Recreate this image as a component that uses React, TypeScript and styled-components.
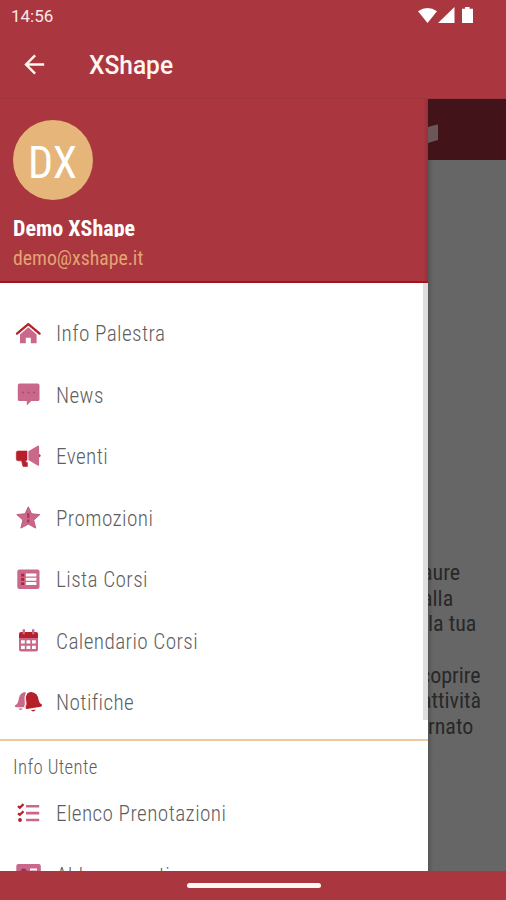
import React from "react";
import styled, { createGlobalStyle } from "styled-components";

const red = "#aa3740";
const deep = "#b5202b";
const pink = "#c9688a";

const Global = createGlobalStyle`
  *, *::before, *::after { box-sizing: border-box; }
  body { margin: 0; background: ${red}; font-family: "Roboto Condensed", Roboto, "Liberation Sans", sans-serif; overflow: hidden; }
  svg { display: block; flex: none; }
`;

const Screen = styled.div`
  width: 506px;
  height: 900px;
  display: flex;
  flex-direction: column;
  overflow: hidden;
  background: ${red};
`;
const StatusBar = styled.div`
  height: 32px;
  flex: none;
  display: flex;
  justify-content: space-between;
  align-items: center;
  padding: 0 32px 0 11px;
  color: #fbe9e6;
  font-family: Roboto, sans-serif;
`;
const StatusIcons = styled.div`
  display: flex;
  align-items: center;
`;
const Toolbar = styled.header`
  height: 67px;
  flex: none;
  display: flex;
  align-items: center;
  padding: 0 0 2px 20px;
  gap: 40px;
  color: #fff5f1;
  border-bottom: 1px solid #a0343c;
  font-family: Roboto, sans-serif;
`;
const Title = styled.div`
  padding-top: 4px;
`;
const Label = styled.span<{ $size: number; $scale?: number; $weight?: number; $space?: number }>`
  display: inline-block;
  flex: none;
  white-space: nowrap;
  line-height: 1.2;
  font-size: ${(p) => p.$size}px;
  font-weight: ${(p) => p.$weight ?? 400};
  letter-spacing: ${(p) => p.$space ?? 0}px;
  transform: scaleX(${(p) => p.$scale ?? 1});
  transform-origin: 0 50%;
`;
const Body = styled.div`
  height: 772px;
  flex: none;
  display: flex;
`;
const Drawer = styled.aside`
  width: 428px;
  flex: none;
  overflow: hidden;
  background: #fff;
  color: #5f5f5f;
`;
const Profile = styled.div`
  height: 184px;
  padding: 21px 0 0 13px;
  background: linear-gradient(to left, #963039, ${red} 5px);
  border-bottom: 2px solid #a3131f;
  display: flex;
  flex-direction: column;
  align-items: flex-start;
`;
const Avatar = styled.div`
  width: 80px;
  height: 80px;
  flex: none;
  border-radius: 50%;
  background: #e6b579;
  color: #fff;
  padding: 6px 0 0 15px;
  display: flex;
  align-items: center;
`;
const Name = styled.div`
  height: 21px;
  margin-top: 16px;
  overflow: hidden;
  color: #fff;
`;
const Email = styled.div`
  height: 28px;
  margin-top: 9px;
  color: #e3a472;
`;
const Scroll = styled.div`
  height: 437px;
  background: linear-gradient(#dedede, #dedede) right top / 5px 100% no-repeat;
`;
const Menu = styled.nav`
  padding-top: 20px;
`;
const Item = styled.div`
  height: 61.5px;
  display: flex;
  align-items: center;
  gap: 14px;
  padding-left: 14px;
`;
const Section = styled.section`
  margin-top: 19px;
  border-top: 2px solid #f0c8a0;
`;
const SectionTitle = styled.div`
  height: 42px;
  padding: 14px 0 0 13px;
`;
const Backdrop = styled.main`
  flex: 1;
  overflow: hidden;
  background: linear-gradient(to right, #555, #666 5px);
  color: #282828;
`;
const PageTabs = styled.div`
  height: 61px;
  background: #421319;
  padding-top: 24px;
`;
const Copy = styled.div<{ $top: number }>`
  margin-top: ${(p) => p.$top}px;
`;
const Line = styled.div<{ $shift: number }>`
  height: 25.7px;
  margin-left: ${(p) => p.$shift}px;
`;
const Bottom = styled.footer`
  flex: 1;
  display: flex;
  justify-content: center;
  padding: 12px 0 0 2px;
`;
const Handle = styled.div`
  width: 134px;
  height: 5px;
  border-radius: 3px;
  background: #fff8f5;
`;

const icons: Record<string, React.ReactNode> = {
  home: (
    <>
      <path d="M6 14.5 14.3 7.2l8.3 7.3V23.3h-5.8v-5.5h-5v5.5H6Z" fill={pink} />
      <path d="m3 13.6 11.3-9.4 11.3 9.4" fill="none" stroke={deep} strokeWidth="2.4" strokeLinecap="round" strokeLinejoin="round" />
    </>
  ),
  news: (
    <>
      <path d="M5.5 2.6h18.2q1.8 0 1.8 1.8v14q0 1.7-1.8 1.7h-6.5L12.8 24.4v-4.3H5.5q-1.7 0-1.7-1.7v-14q0-1.8 1.7-1.8Z" fill={pink} />
      <path d="M8 11.5h2m3.5 0h2m3.5 0h2" stroke="#b04a6c" strokeWidth="1.5" />
    </>
  ),
  event: (
    <>
      <path d="M4 8h9v9.3h-1.2v2.2h1.6v4H9L7.5 17.8H4q-1.7 0-1.7-1.7V9.5Q2.3 8 4 8Z" fill={deep} stroke={deep} strokeWidth=".6" />
      <path d="m14.4 8.3 9.2-5.6q1.5-.8 1.5 1v18q0 1.7-1.5.7l-9.2-5.3Z" fill={pink} />
      <path d="M25.1 11q3.2 1.6 0 3.4Z" fill={deep} />
    </>
  ),
  promo: (
    <>
      <path d="m14.3 2.8 3.3 7 8.2.8-6.1 5.5 2 8-7.4-4-7.4 4 2-8-6.1-5.5 8.2-.8Z" fill={pink} stroke="#c25a7b" strokeLinejoin="round" />
      <path d="M14.2 9v5m0 1.5v3" stroke="#b23a59" strokeWidth="2.4" />
    </>
  ),
  list: (
    <>
      <rect x="3.3" y="3.5" width="22.2" height="19.4" rx="2" fill={pink} />
      <path d="M11.8 7.6h10.6v3H11.8zm0 4.2h10.6v3H11.8zm0 4.2h10.6v3H11.8z" fill="#fff" />
      <path d="M7.2 7.8h3v2.6h-3zm0 4.3h3v2.6h-3zm0 4.3h3v2.6h-3z" fill={deep} />
    </>
  ),
  calendar: (
    <>
      <path d="M5 10h19v12.5q0 2-2 2H7q-2 0-2-2Z" fill={pink} />
      <path d="M7 5h15q2 0 2 2v4H5V7q0-2 2-2Z" fill={deep} />
      <path d="M9.8 2.2v5m9.4-5v5" stroke={pink} strokeWidth="2.4" />
      <path d="M7 13.2h3.8v3.3H7zm5.5 0h3.8v3.3h-3.8zm5.5 0h3.8v3.3H18zM7 18.7h3.8V22H7zm5.5 0h3.8V22h-3.8zm5.5 0h3.8V22H18z" fill="#fff" />
    </>
  ),
  bells: (
    <>
      <path d="M11.8 3q-5.8.3-6.8 6L4 13.3q-.6 2-3 3.2-.8 1.8 1.2 1.8h9.4V4ZM4.5 19.5h4.2q-2.2 3-4.2 0Z" fill={pink} />
      <path d="M13.8 4q5-2.4 8.8 1.6 1.5 1.8 2 5.5.4 2.8 3.2 4.5 1 1.5-1 2.1l-14 2.2q-1.7 0-1-1.7 1.3-2.7.4-6.4-1-5.6 1.6-7.8Zm3 17.3 5-.8q-2.2 3.3-5 .8Z" fill={deep} />
      <path d="M12.5 4.3q-2.3 3.5-1.3 8 .6 3-.7 5.7" fill="none" stroke="#fff" strokeWidth="1" />
    </>
  ),
  checks: (
    <>
      <path d="M12 6.2h13.2M12 13.1h13.2M12 20h13.2" stroke={pink} strokeWidth="2.6" />
      <path d="m4 6.2 1.8 1.5 3.7-3.6M4 13.3l1.8 1.5 3.7-3.6" fill="none" stroke={deep} strokeWidth="2.3" />
      <circle cx="6" cy="20" r="1.9" fill={deep} />
    </>
  ),
  card: (
    <>
      <rect x="2.3" y="3" width="24.5" height="20" rx="2" fill={pink} />
      <circle cx="9.7" cy="10.5" r="3" fill="#a92f55" />
      <path d="M16 8.5h7M16 12.5h7" stroke="#fff" strokeWidth="2" />
    </>
  ),
};

const Icon = ({ name }: { name: string }) => (
  <svg width="28" height="28" viewBox="0 0 28 28" overflow="visible">{icons[name]}</svg>
);

const entries: [string, string][] = [
  ["home", "Info Palestra"],
  ["news", "News"],
  ["event", "Eventi"],
  ["promo", "Promozioni"],
  ["list", "Lista Corsi"],
  ["calendar", "Calendario Corsi"],
  ["bells", "Notifiche"],
];

const MenuRow = ({ icon, text }: { icon: string; text: string }) => (
  <Item>
    <Icon name={icon} />
    <Label $size={22.4} $weight={350} $space={0.4} $scale={0.95}>{text}</Label>
  </Item>
);

const CopyText = ({ shift, text }: { shift: number; text: string }) => (
  <Line $shift={shift}><Label $size={22} $weight={370}>{text}</Label></Line>
);

export default function App() {
  return (
    <Screen>
      <Global />
      <StatusBar>
        <Label $size={17} $weight={450}>14:56</Label>
        <StatusIcons>
          <svg width="56" height="18" viewBox="0 0 56 18" fill="#fff">
            <path d="M0 4.3Q9.5-2.5 19 4.3L9.5 16Z" />
            <path d="M36.5 0v16H20Z" />
            <path d="M47 0h4.5v1.8H55V16H44V1.8h3Z" />
          </svg>
        </StatusIcons>
      </StatusBar>
      <Toolbar>
        <svg width="29" height="29" viewBox="0 0 24 24" fill="none" stroke="currentColor" strokeWidth="2">
          <path d="M20 12H5M12.5 4.5 5 12l7.5 7.5" />
        </svg>
        <Title><Label $size={25} $weight={500} $scale={0.98}>XShape</Label></Title>
      </Toolbar>
      <Body>
        <Drawer>
          <Profile>
            <Avatar><Label $size={44}>DX</Label></Avatar>
            <Name><Label $size={22} $weight={700}>Demo XShape</Label></Name>
            <Email><Label $size={21} $scale={0.94}>demo@xshape.it</Label></Email>
          </Profile>
          <Scroll>
            <Menu>
              {entries.map(([icon, text]) => (
                <MenuRow key={text} icon={icon} text={text} />
              ))}
            </Menu>
          </Scroll>
          <Section>
            <SectionTitle><Label $size={20} $weight={350} $space={0.4} $scale={0.94}>Info Utente</Label></SectionTitle>
            <MenuRow icon="checks" text="Elenco Prenotazioni" />
            <MenuRow icon="card" text="Abbonamenti" />
          </Section>
        </Drawer>
        <Backdrop>
          <PageTabs>
            <svg width="12" height="22" viewBox="0 0 12 22"><path d="M0 4 9 1.5q1 0 1 1V17L0 20Z" fill="#6b5658" /></svg>
          </PageTabs>
          <Copy $top={400}>
            <CopyText shift={-6} text="aure" />
            <CopyText shift={-6} text="alla" />
            <CopyText shift={0} text="la tua" />
          </Copy>
          <Copy $top={25.5}>
            <CopyText shift={-8} text="coprire" />
            <CopyText shift={-7} text="attività" />
            <CopyText shift={0} text="rnato" />
          </Copy>
        </Backdrop>
      </Body>
      <Bottom><Handle /></Bottom>
    </Screen>
  );
}
